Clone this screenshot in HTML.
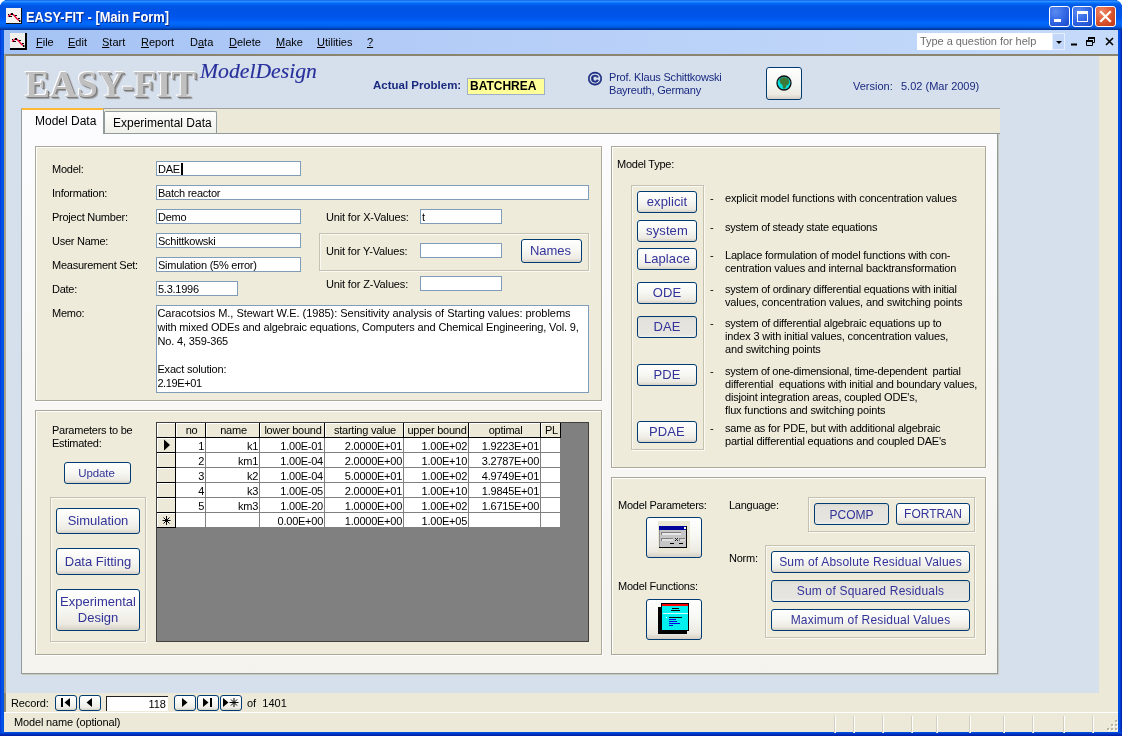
<!DOCTYPE html>
<html>
<head>
<meta charset="utf-8">
<title>EASY-FIT - [Main Form]</title>
<style>
*{box-sizing:border-box;margin:0;padding:0}
html,body{width:1122px;height:736px;overflow:hidden;background:#0054e3}
body{font-family:"Liberation Sans",sans-serif;font-size:11px;color:#000;position:relative}
.abs,.abs *{position:absolute}
#win{position:absolute;left:0;top:0;width:1122px;height:736px;overflow:hidden;will-change:transform}
#win div,#win span,#win svg{position:absolute}
/* title bar */
#title{left:0;top:0;width:1122px;height:30px;background:linear-gradient(to bottom,#0058ee 0%,#3593ff 4%,#288eff 6%,#127dff 8%,#036ffc 10%,#0262ee 14%,#0057e5 20%,#0054e3 24%,#0055eb 56%,#005bf5 66%,#026afe 76%,#0062ef 86%,#0052d6 92%,#0040ab 96%,#003092 100%);border-radius:7px 7px 0 0}
#title .txt{left:26px;top:9px;font-weight:bold;font-size:14px;color:#fff;white-space:nowrap;text-shadow:1px 1px 0 #0a2a8a;transform-origin:0 0;transform:scaleX(0.92)}
.lb{left:0;top:30px;width:4px;height:706px;background:linear-gradient(to right,#0831d9 0,#0046e0 1px,#0058f0 2px,#0054e3 3px,#0048d8 4px)}
.rb{left:1118px;top:30px;width:4px;height:706px;background:linear-gradient(to right,#0048d8 0,#0054e3 1px,#0046e0 2px,#0030c0 3px,#001ea0 4px)}
.bb{left:0;top:732px;width:1122px;height:4px;background:linear-gradient(to bottom,#0054e3 0,#0048d8 1px,#0030c0 2px,#001ea0 4px)}
/* menu bar */
#menu{left:4px;top:30px;width:1114px;height:24px;background:linear-gradient(to right,#a4c2f4 0%,#b4cdf7 40%,#c6dbfa 100%)}
#menu .mi{top:6px;font-size:11px;white-space:nowrap;color:#000}
#menu u{text-decoration:underline;text-underline-offset:1px}

.cb{top:6px;width:21px;height:21px;border:1px solid #fff;border-radius:3px;background:radial-gradient(circle at 30% 25%,#5b8cf0 0%,#3a6ee8 40%,#2458d8 75%,#1c48c0 100%)}
.cb.cx{background:radial-gradient(circle at 30% 25%,#ee8a6a 0%,#e0603a 40%,#cc4420 75%,#b83a18 100%)}
#help{left:913px;top:3px;width:148px;height:17px;background:#fff;border:1px solid #fff}
#help span{left:2px;top:1px;font-size:11px;letter-spacing:-0.05px;color:#6e6e6e;white-space:nowrap}
#help .dd{left:134px;top:-1px;width:13px;height:17px;background:#c2d7f8;border:1px solid #e4eefc}
#help .dd svg{left:0;top:-1px}

#logo{left:25px;top:62px;transform-origin:0 0;transform:scaleX(0.985);font-family:"Liberation Serif",serif;font-weight:bold;font-size:38px;color:#c0c0c0;white-space:nowrap;text-shadow:-1px -1px 0 #fff,1px 1px 0 #7a7a7a,2px 2px 1px #9a9a9a;letter-spacing:0px}
#sub{left:200px;top:59px;font-family:"Liberation Serif",serif;font-style:italic;font-size:21.700px;color:#28309c;white-space:nowrap;-webkit-text-stroke:0.15px #28309c}
.hb{font-weight:bold;font-size:11.5px;color:#1a2a80;white-space:nowrap}
.hn{font-size:11px;color:#1a2a80;white-space:nowrap;letter-spacing:-0.2px}
#prob{left:467px;top:78px;width:78px;height:17px;background:#ffff99;border:1px solid #9fb0c8}
#prob span{left:2px;top:0px;font-weight:bold;font-size:12px;color:#000}
#copy{left:588px;top:67.500px;font-size:19px;color:#1a2a80;font-weight:bold;-webkit-text-stroke:0.6px #1a2a80}
#tabstrip{left:21px;top:108px;width:979px;height:26px;background:#ece9d8;border-top:1px solid #a0a0a0;border-bottom:1px solid #919b9c}
#tabpage{left:21px;top:133px;width:977px;height:541px;background:linear-gradient(to bottom,#fcfcfe 0%,#f4f3ee 100%);border:1px solid #919b9c;box-shadow:1px 1px 0 #c9c7ba}
#tab1{left:21px;top:108px;width:83px;height:26px;background:#fcfcfe;border-left:1px solid #919b9c;border-right:1px solid #919b9c;border-top:2px solid #ffb834;border-radius:2px 2px 0 0}
#tab1 span{left:13px;top:4px;font-size:12px;white-space:nowrap}
#tab2{left:104px;top:111px;width:113px;height:22px;background:linear-gradient(#fefefe,#f0f0ea);border:1px solid #919b9c;border-bottom:none;border-radius:2px 2px 0 0}
#tab2 span{left:8px;top:4px;font-size:12px;white-space:nowrap}
.inp.memo span{white-space:nowrap;line-height:14px;top:0px;left:0.400px}

#grid{left:156px;top:422px;width:433px;height:220px;background:#808080;border:1px solid #404040;overflow:hidden}
#grid .gh{background:#ece9d8;border-right:1px solid #000;border-bottom:1px solid #000;box-shadow:inset 1px 1px 0 #fff;font-size:11px;letter-spacing:-0.25px;overflow:hidden}
#grid .gh span{left:1px;width:100%;text-align:center;top:1px;white-space:nowrap;line-height:12px}
#grid .gs{background:#ece9d8;border-right:1px solid #000;border-bottom:1px solid #000;box-shadow:inset 1px 1px 0 #fff}
#grid .gc{background:#fff;border-right:1px solid #808080;border-bottom:1px solid #808080;font-size:11px;letter-spacing:-0.25px;overflow:hidden}
#grid .gc span{right:1px;top:2px;white-space:nowrap;line-height:13px;text-align:right}
.btn.sm{font-size:11.500px;letter-spacing:-0.1px}

.btn.mt{font-size:13px;letter-spacing:0.1px}
.btn.sm2{font-size:12px;letter-spacing:0.2px}

.tah{font-size:11px;white-space:nowrap;color:#000}
.btn.nb{top:2px;width:22px;height:16px;border-radius:3px}
.btn.nb svg{left:0;top:0}
#recno{left:100px;top:3px;width:62px;height:15px;background:#fff;border-top:1px solid #202020;border-left:1px solid #202020}
#recno span{right:2px;top:1px;font-size:11px}
#status .sep{top:3px;width:2px;height:17px;border-left:1px solid #d2cfc0;border-right:1px solid #fff}
.lbl.ds{letter-spacing:-0.17px}
/* client */
#client{left:4px;top:54px;width:1114px;height:639px;background:#d6dfec;border-top:2px solid #8b8570;border-left:2px solid #a8a28c}
#rstrip{left:1099px;top:56px;width:19px;height:637px;background:#ece9d8}
#nav{left:4px;top:693px;width:1114px;height:19px;background:#ece9d8;border-left:2px solid #8e8872}
#status{left:4px;top:712px;width:1114px;height:20px;background:#ece9d8;border-top:1px solid #fff}
.t11{font-size:11px;white-space:nowrap}
.lbl{font-size:11px;white-space:nowrap;color:#000;letter-spacing:-0.25px}
.inp{background:#fff;border:1px solid #7f9db9;height:15px;font-size:11px;white-space:nowrap;overflow:hidden;letter-spacing:-0.25px}
.inp span{left:1px;top:1px;line-height:13px}
.panel{background:#eeebdb;border:1px solid #aca899;box-shadow:1px 1px 0 #fff, inset 1px 1px 0 #fff}
.grp{border:1px solid #c5c2b2;box-shadow:1px 1px 0 #fbfaf5, inset 1px 1px 0 rgba(255,255,255,0.65)}
.btn{border:1px solid #003c74;border-radius:3px;background:linear-gradient(to bottom,#fff 0%,#f6f6f2 50%,#eceae2 85%,#d6d0c5 100%);color:#333399;font-size:13px;text-align:center;white-space:nowrap}
.btn.on{background:linear-gradient(to bottom,#d9d8d0 0%,#e3e2dc 15%,#e6e5df 85%,#efeee9 100%)}
.btn span{left:0;width:100%;text-align:center}
</style>
</head>
<body>
<div id="win">
  <div style="left:0;top:0;width:5px;height:5px;background:#fff"></div><div style="left:1117px;top:0;width:5px;height:5px;background:#fff"></div>
  <div id="title">
    <svg style="left:6px;top:8px" width="16" height="16" viewBox="0 0 16 16"><rect width="16" height="16" fill="#f4f2f0"/><rect x="0" y="15" width="16" height="1" fill="#111"/><rect x="15" y="0" width="1" height="16" fill="#111"/><path d="M2 8.5 L5.500 5.800 L7.500 6.800 L11 10.800 L13 12.500" stroke="#f0002a" stroke-width="1.3" fill="none"/><rect x="2" y="6" width="1" height="1" fill="#000"/><rect x="5" y="5" width="2" height="2" fill="#000"/><rect x="3" y="8" width="3" height="1" fill="#000"/><rect x="9" y="7" width="2" height="1" fill="#000"/><rect x="12" y="10" width="2" height="1" fill="#000"/><rect x="13" y="12" width="1.500" height="2" fill="#000"/></svg>
    <span class="txt">EASY-FIT - [Main Form]</span>
    <div class="cb" style="left:1049px"><svg width="21" height="21" viewBox="0 0 21 21" style="left:-1px;top:-1px"><rect x="5" y="13" width="7" height="3" fill="#fff"/></svg></div>
    <div class="cb" style="left:1072px"><svg width="21" height="21" viewBox="0 0 21 21" style="left:-1px;top:-1px"><rect x="5.5" y="6.5" width="10" height="9" fill="none" stroke="#fff" stroke-width="1"/><rect x="5" y="5" width="11" height="3" fill="#fff"/></svg></div>
    <div class="cb cx" style="left:1095px"><svg width="21" height="21" viewBox="0 0 21 21" style="left:-1px;top:-1px"><path d="M6 6 L15 15 M15 6 L6 15" stroke="#fff" stroke-width="2.2" stroke-linecap="square"/></svg></div>
  </div>
  <div class="lb"></div><div class="rb"></div><div class="bb"></div>
  <div id="menu">
    <svg style="left:6px;top:3px" width="17" height="17" viewBox="0 0 17 17"><rect width="16" height="16" fill="#f0f0ec"/><rect x="0" y="15" width="17" height="2" fill="#000"/><rect x="15" y="0" width="2" height="17" fill="#000"/><path d="M2 8.5 L5.500 5.800 L7.500 6.800 L11 10.800 L13 12.500" stroke="#f0002a" stroke-width="1.3" fill="none"/><rect x="2" y="6" width="1" height="1" fill="#000"/><rect x="5" y="5" width="2" height="2" fill="#000"/><rect x="3" y="8" width="3" height="1" fill="#000"/><rect x="9" y="7" width="2" height="1" fill="#000"/><rect x="12" y="10" width="2" height="1" fill="#000"/><rect x="13" y="12" width="1.500" height="2" fill="#000"/></svg>
    <span class="mi" style="left:32px"><u>F</u>ile</span>
    <span class="mi" style="left:64px"><u>E</u>dit</span>
    <span class="mi" style="left:98px"><u>S</u>tart</span>
    <span class="mi" style="left:137px"><u>R</u>eport</span>
    <span class="mi" style="left:186px">D<u>a</u>ta</span>
    <span class="mi" style="left:225px"><u>D</u>elete</span>
    <span class="mi" style="left:272px"><u>M</u>ake</span>
    <span class="mi" style="left:313px"><u>U</u>tilities</span>
    <span class="mi" style="left:363px"><u>?</u></span>
    <div id="help"><span>Type a question for help</span><div class="dd"><svg width="12" height="18" viewBox="0 0 12 18"><path d="M3 8 L9 8 L6 11 Z" fill="#000"/></svg></div></div>
    <svg style="left:1065px;top:4px" width="48" height="14" viewBox="0 0 48 14"><rect x="2" y="9.5" width="6" height="2" fill="#000"/><path d="M19.5 3.5 h6 v5 h-6 z M17.500 6.500 h6 v5 h-6 z" fill="none" stroke="#000" stroke-width="1"/><rect x="19" y="3" width="7" height="2" fill="#000"/><rect x="17" y="6" width="7" height="2" fill="#000"/><rect x="18" y="8" width="5" height="3" fill="#c2d7f8"/><path d="M37 4 L44 11 M44 4 L37 11" stroke="#000" stroke-width="1.6"/></svg>
  </div>
  <div id="client"></div>
  <div id="rstrip"></div>
  <!-- header -->
  <span id="logo">EASY-FIT</span>
  <span id="sub">ModelDesign</span>
  <span class="hb" style="left:373px;top:79px">Actual Problem:</span>
  <div id="prob"><span>BATCHREA</span></div>
  <span id="copy">&copy;</span>
  <span class="hn" style="left:609px;top:71px">Prof. Klaus Schittkowski</span>
  <span class="hn" style="left:609px;top:84px">Bayreuth, Germany</span>
  <div class="btn" style="left:766px;top:67px;width:36px;height:33px"><svg style="left:7.500px;top:5.500px" width="18" height="18" viewBox="0 0 18 18"><circle cx="9" cy="9" r="7" fill="#00e0e0" stroke="#101010" stroke-width="1.3"/><path d="M5 4.500 L8.500 3 L12.500 4 L14.500 7.500 L13.500 10.500 L11.500 11.500 L10.500 14.500 L8 14.500 L7.500 11 L5.500 9.500 L4.500 7 Z" fill="#3d7a3a"/></svg></div>
  <span class="hn" style="left:853px;top:80px;letter-spacing:0">Version:</span>
  <span class="hn" style="left:901px;top:80px;letter-spacing:0">5.02 (Mar 2009)</span>
  <!-- tabs -->
  <div id="tabstrip"></div>
  <div id="tabpage"></div>
  <div id="tab2"><span>Experimental Data</span></div>
  <div id="tab1"><span>Model Data</span></div>
  <!-- panel 1 -->
  <div class="panel" style="left:35px;top:146px;width:567px;height:255px"></div>
  <span class="lbl" style="left:52px;top:163px">Model:</span>
  <span class="lbl" style="left:52px;top:187px">Information:</span>
  <span class="lbl" style="left:52px;top:211px">Project Number:</span>
  <span class="lbl" style="left:52px;top:235px">User Name:</span>
  <span class="lbl" style="left:52px;top:259px">Measurement Set:</span>
  <span class="lbl" style="left:52px;top:283px">Date:</span>
  <span class="lbl" style="left:52px;top:307px">Memo:</span>
  <div class="inp" style="left:156px;top:161px;width:145px"><span>DAE</span><div style="left:24px;top:1px;width:1.500px;height:12px;background:#000"></div></div>
  <div class="inp" style="left:156px;top:185px;width:433px"><span>Batch reactor</span></div>
  <div class="inp" style="left:156px;top:209px;width:145px"><span>Demo</span></div>
  <div class="inp" style="left:156px;top:233px;width:145px"><span>Schittkowski</span></div>
  <div class="inp" style="left:156px;top:257px;width:145px"><span>Simulation (5% error)</span></div>
  <div class="inp" style="left:156px;top:281px;width:82px"><span>5.3.1996</span></div>
  <span class="lbl" style="left:326px;top:211px;letter-spacing:-0.15px">Unit for X-Values:</span>
  <span class="lbl" style="left:326px;top:245px;letter-spacing:-0.15px">Unit for Y-Values:</span>
  <span class="lbl" style="left:326px;top:278px;letter-spacing:-0.15px">Unit for Z-Values:</span>
  <div class="inp" style="left:420px;top:209px;width:82px"><span>t</span></div>
  <div class="grp" style="left:319px;top:233px;width:270px;height:38px"></div>
  <div class="inp" style="left:420px;top:243px;width:82px"></div>
  <div class="inp" style="left:420px;top:276px;width:82px"></div>
  <div class="btn" style="left:521px;top:239px;width:61px;height:24px"><span style="top:3px;left:-1px">Names</span></div>
  <div class="inp memo" style="left:156px;top:305px;width:433px;height:88px"><span style="letter-spacing:-0.03px">Caracotsios M., Stewart W.E. (1985): Sensitivity analysis of Starting values: problems</span><span style="top:14px;letter-spacing:-0.138px">with mixed ODEs and algebraic equations, Computers and Chemical Engineering, Vol. 9,</span><span style="top:28px;letter-spacing:-0.15px">No. 4, 359-365</span><span style="top:56px;letter-spacing:-0.17px">Exact solution:</span><span style="top:70px;letter-spacing:-0.4px">2.19E+01</span></div>
  <!-- panel 2 -->
  <div class="panel" style="left:35px;top:410px;width:567px;height:245px"></div>
  <span class="lbl" style="left:52px;top:424px">Parameters to be</span>
  <span class="lbl" style="left:52px;top:437px">Estimated:</span>
  <div class="btn sm" style="left:64px;top:462px;width:67px;height:22px"><span style="top:3.500px;left:-1px">Update</span></div>
  <div class="grp" style="left:50px;top:497px;width:96px;height:145px"></div>
  <div class="btn" style="left:56px;top:508px;width:84px;height:26px"><span style="top:4px">Simulation</span></div>
  <div class="btn" style="left:56px;top:548px;width:84px;height:27px"><span style="top:5px">Data Fitting</span></div>
  <div class="btn" style="left:56px;top:589px;width:84px;height:42px"><span style="top:4px;line-height:16px">Experimental<br>Design</span></div>
  <div id="grid">
  <div class="gh" style="left:0px;top:0;width:19px;height:15px"><span></span></div>
  <div class="gh" style="left:19px;top:0;width:30px;height:15px"><span>no</span></div>
  <div class="gh" style="left:49px;top:0;width:54px;height:15px"><span>name</span></div>
  <div class="gh" style="left:103px;top:0;width:65px;height:15px"><span>lower bound</span></div>
  <div class="gh" style="left:168px;top:0;width:79px;height:15px"><span>starting value</span></div>
  <div class="gh" style="left:247px;top:0;width:65px;height:15px"><span>upper bound</span></div>
  <div class="gh" style="left:312px;top:0;width:72px;height:15px"><span>optimal</span></div>
  <div class="gh" style="left:384px;top:0;width:20px;height:15px"><span>PL</span></div>
  <div class="gs" style="left:0;top:15px;width:19px;height:15px"><svg width="19" height="15" viewBox="0 0 19 15" style="left:0;top:0"><path d="M7 1.500 L13 7 L7 12.500 Z" fill="#000"/></svg></div>
  <div class="gc" style="left:19px;top:15px;width:30px;height:15px"><span>1</span></div>
  <div class="gc" style="left:49px;top:15px;width:54px;height:15px"><span>k1</span></div>
  <div class="gc" style="left:103px;top:15px;width:65px;height:15px"><span>1.00E-01</span></div>
  <div class="gc" style="left:168px;top:15px;width:79px;height:15px"><span>2.0000E+01</span></div>
  <div class="gc" style="left:247px;top:15px;width:65px;height:15px"><span>1.00E+02</span></div>
  <div class="gc" style="left:312px;top:15px;width:72px;height:15px"><span>1.9223E+01</span></div>
  <div class="gc" style="left:384px;top:15px;width:20px;height:15px"><span></span></div>
  <div class="gs" style="left:0;top:30px;width:19px;height:15px"></div>
  <div class="gc" style="left:19px;top:30px;width:30px;height:15px"><span>2</span></div>
  <div class="gc" style="left:49px;top:30px;width:54px;height:15px"><span>km1</span></div>
  <div class="gc" style="left:103px;top:30px;width:65px;height:15px"><span>1.00E-04</span></div>
  <div class="gc" style="left:168px;top:30px;width:79px;height:15px"><span>2.0000E+00</span></div>
  <div class="gc" style="left:247px;top:30px;width:65px;height:15px"><span>1.00E+10</span></div>
  <div class="gc" style="left:312px;top:30px;width:72px;height:15px"><span>3.2787E+00</span></div>
  <div class="gc" style="left:384px;top:30px;width:20px;height:15px"><span></span></div>
  <div class="gs" style="left:0;top:45px;width:19px;height:15px"></div>
  <div class="gc" style="left:19px;top:45px;width:30px;height:15px"><span>3</span></div>
  <div class="gc" style="left:49px;top:45px;width:54px;height:15px"><span>k2</span></div>
  <div class="gc" style="left:103px;top:45px;width:65px;height:15px"><span>1.00E-04</span></div>
  <div class="gc" style="left:168px;top:45px;width:79px;height:15px"><span>5.0000E+01</span></div>
  <div class="gc" style="left:247px;top:45px;width:65px;height:15px"><span>1.00E+02</span></div>
  <div class="gc" style="left:312px;top:45px;width:72px;height:15px"><span>4.9749E+01</span></div>
  <div class="gc" style="left:384px;top:45px;width:20px;height:15px"><span></span></div>
  <div class="gs" style="left:0;top:60px;width:19px;height:15px"></div>
  <div class="gc" style="left:19px;top:60px;width:30px;height:15px"><span>4</span></div>
  <div class="gc" style="left:49px;top:60px;width:54px;height:15px"><span>k3</span></div>
  <div class="gc" style="left:103px;top:60px;width:65px;height:15px"><span>1.00E-05</span></div>
  <div class="gc" style="left:168px;top:60px;width:79px;height:15px"><span>2.0000E+01</span></div>
  <div class="gc" style="left:247px;top:60px;width:65px;height:15px"><span>1.00E+10</span></div>
  <div class="gc" style="left:312px;top:60px;width:72px;height:15px"><span>1.9845E+01</span></div>
  <div class="gc" style="left:384px;top:60px;width:20px;height:15px"><span></span></div>
  <div class="gs" style="left:0;top:75px;width:19px;height:15px"></div>
  <div class="gc" style="left:19px;top:75px;width:30px;height:15px"><span>5</span></div>
  <div class="gc" style="left:49px;top:75px;width:54px;height:15px"><span>km3</span></div>
  <div class="gc" style="left:103px;top:75px;width:65px;height:15px"><span>1.00E-20</span></div>
  <div class="gc" style="left:168px;top:75px;width:79px;height:15px"><span>1.0000E+00</span></div>
  <div class="gc" style="left:247px;top:75px;width:65px;height:15px"><span>1.00E+02</span></div>
  <div class="gc" style="left:312px;top:75px;width:72px;height:15px"><span>1.6715E+00</span></div>
  <div class="gc" style="left:384px;top:75px;width:20px;height:15px"><span></span></div>
  <div class="gs" style="left:0;top:90px;width:19px;height:15px"><svg width="19" height="15" viewBox="0 0 19 15" style="left:0;top:0"><path d="M9.5 3 V12 M5.500 7.500 H13.500 M6.500 4.500 L12.500 10.500 M12.500 4.500 L6.500 10.500" stroke="#000" stroke-width="1" fill="none"/></svg></div>
  <div class="gc" style="left:19px;top:90px;width:30px;height:15px"><span></span></div>
  <div class="gc" style="left:49px;top:90px;width:54px;height:15px"><span></span></div>
  <div class="gc" style="left:103px;top:90px;width:65px;height:15px"><span>0.00E+00</span></div>
  <div class="gc" style="left:168px;top:90px;width:79px;height:15px"><span>1.0000E+00</span></div>
  <div class="gc" style="left:247px;top:90px;width:65px;height:15px"><span>1.00E+05</span></div>
  <div class="gc" style="left:312px;top:90px;width:72px;height:15px"><span></span></div>
  <div class="gc" style="left:384px;top:90px;width:20px;height:15px"><span></span></div>
  </div>
  <!-- panel 3 -->
  <div class="panel" style="left:611px;top:146px;width:375px;height:322px"></div>
  <span class="lbl" style="left:617px;top:158px">Model Type:</span>
  <div class="grp" style="left:631px;top:185px;width:73px;height:265px"></div>
  <div class="btn mt" style="left:637px;top:191px;width:60px;height:22px"><span style="top:2px">explicit</span></div>
  <div class="btn mt" style="left:637px;top:220px;width:60px;height:22px"><span style="top:2px">system</span></div>
  <div class="btn mt" style="left:637px;top:248px;width:60px;height:22px"><span style="top:2px">Laplace</span></div>
  <div class="btn mt" style="left:637px;top:282px;width:60px;height:22px"><span style="top:2px">ODE</span></div>
  <div class="btn mt on" style="left:637px;top:316px;width:60px;height:22px"><span style="top:2px">DAE</span></div>
  <div class="btn mt" style="left:637px;top:364px;width:60px;height:22px"><span style="top:2px">PDE</span></div>
  <div class="btn mt" style="left:637px;top:421px;width:60px;height:22px"><span style="top:2px">PDAE</span></div>
  <span class="lbl ds" style="left:710px;top:192px">-</span>
  <span class="lbl ds" style="left:725px;top:192px">explicit model functions with concentration values</span>
  <span class="lbl ds" style="left:710px;top:221px">-</span>
  <span class="lbl ds" style="left:725px;top:221px;letter-spacing:-0.250px">system of steady state equations</span>
  <span class="lbl ds" style="left:710px;top:249px">-</span>
  <span class="lbl ds" style="left:725px;top:249px;letter-spacing:-0.210px">Laplace formulation of model functions with con-</span>
  <span class="lbl ds" style="left:725px;top:262px;letter-spacing:-0.186px">centration values and internal backtransformation</span>
  <span class="lbl ds" style="left:710px;top:283px">-</span>
  <span class="lbl ds" style="left:725px;top:283px;letter-spacing:-0.246px">system of ordinary differential equations with initial</span>
  <span class="lbl ds" style="left:725px;top:296px;letter-spacing:-0.134px">values, concentration values, and switching points</span>
  <span class="lbl ds" style="left:710px;top:317px">-</span>
  <span class="lbl ds" style="left:725px;top:317px;letter-spacing:-0.214px">system of differential algebraic equations up to</span>
  <span class="lbl ds" style="left:725px;top:330px;letter-spacing:-0.160px">index 3 with initial values, concentration values,</span>
  <span class="lbl ds" style="left:725px;top:343px">and switching points</span>
  <span class="lbl ds" style="left:710px;top:365px">-</span>
  <span class="lbl ds" style="left:725px;top:365px;letter-spacing:-0.278px">system of one-dimensional, time-dependent&nbsp; partial</span>
  <span class="lbl ds" style="left:725px;top:378px;letter-spacing:-0.196px">differential&nbsp; equations with initial and boundary values,</span>
  <span class="lbl ds" style="left:725px;top:391px;letter-spacing:-0.218px">disjoint integration areas, coupled ODE's,</span>
  <span class="lbl ds" style="left:725px;top:404px">flux functions and switching points</span>
  <span class="lbl ds" style="left:710px;top:422px">-</span>
  <span class="lbl ds" style="left:725px;top:422px;letter-spacing:-0.209px">same as for PDE, but with additional algebraic</span>
  <span class="lbl ds" style="left:725px;top:435px;letter-spacing:-0.197px">partial differential equations and coupled DAE's</span>
  <!-- panel 4 -->
  <div class="panel" style="left:611px;top:477px;width:375px;height:178px"></div>
  <span class="lbl" style="left:618px;top:499px">Model Parameters:</span>
  <span class="lbl" style="left:618px;top:580px">Model Functions:</span>
  <span class="lbl" style="left:729px;top:499px">Language:</span>
  <span class="lbl" style="left:729px;top:552px">Norm:</span>
  <div class="btn" style="left:646px;top:517px;width:56px;height:41px"><svg style="left:11px;top:3px" width="32" height="32" viewBox="0 0 32 32" shape-rendering="crispEdges"><rect width="32" height="32" fill="#ebe7d6"/><rect x="1" y="5" width="28" height="22" fill="#c6c6c6"/><rect x="1" y="5" width="27" height="4" fill="#00009c"/><rect x="26" y="6" width="2" height="2" fill="#fff"/><rect x="28" y="5" width="1" height="22" fill="#000"/><rect x="1" y="26" width="28" height="1" fill="#000"/><rect x="1" y="9" width="1" height="17" fill="#909090"/><rect x="3" y="11" width="20" height="1" fill="#808080"/><rect x="3" y="12" width="1" height="2" fill="#808080"/><rect x="4" y="12" width="19" height="2" fill="#e8e8e8"/><rect x="3" y="17" width="12" height="1" fill="#808080"/><rect x="3" y="18" width="1" height="2" fill="#808080"/><rect x="4" y="18" width="11" height="2" fill="#e0e0e0"/><rect x="21" y="17" width="6" height="1" fill="#808080"/><rect x="21" y="18" width="1" height="2" fill="#808080"/><rect x="22" y="18" width="5" height="2" fill="#d8d8d8"/><path d="M17 17 l3 3 m0 -3 l-3 3" stroke="#202020" stroke-width="1" shape-rendering="auto"/><rect x="12" y="22" width="4" height="1" fill="#000"/><rect x="21" y="22" width="4" height="1" fill="#000"/></svg></div>
  <div class="btn" style="left:646px;top:599px;width:56px;height:41px"><svg style="left:11px;top:3px" width="32" height="32" viewBox="0 0 32 32" shape-rendering="crispEdges"><rect x="0" y="4" width="29" height="27" fill="#000"/><rect x="3" y="0" width="28" height="28" fill="#000"/><rect x="4" y="1" width="26" height="2" fill="#ff0000"/><rect x="4" y="3" width="26" height="24" fill="#00f0f0"/><rect x="14" y="5" width="7" height="1" fill="#000"/><rect x="13" y="7" width="9" height="1" fill="#000"/><rect x="5" y="10" width="25" height="1" fill="#d0ffff"/><rect x="8" y="14" width="1" height="1" fill="#fff"/><rect x="11" y="14" width="13" height="1" fill="#000"/><rect x="11" y="16" width="7" height="1" fill="#0000e0"/><rect x="11" y="18" width="8" height="1" fill="#0000e0"/><rect x="11" y="20" width="11" height="1" fill="#0000e0"/><rect x="11" y="22" width="4" height="1" fill="#0000e0"/></svg></div>
  <div class="grp" style="left:808px;top:497px;width:167px;height:35px"></div>
  <div class="btn sm2 on" style="left:814px;top:503px;width:75px;height:22px;letter-spacing:0"><span style="top:3.500px">PCOMP</span></div>
  <div class="btn sm2" style="left:896px;top:503px;width:74px;height:22px;letter-spacing:0"><span style="top:3px">FORTRAN</span></div>
  <div class="grp" style="left:765px;top:545px;width:210px;height:93px"></div>
  <div class="btn sm2" style="left:771px;top:551px;width:199px;height:22px"><span style="top:3px">Sum of Absolute Residual Values</span></div>
  <div class="btn sm2 on" style="left:771px;top:580px;width:199px;height:22px"><span style="top:3px">Sum of Squared Residuals</span></div>
  <div class="btn sm2" style="left:771px;top:609px;width:199px;height:22px"><span style="top:3px">Maximum of Residual Values</span></div>
  <div id="nav">
    <span class="tah" style="left:5px;top:4px;letter-spacing:-0.1px">Record:</span>
    <div class="btn nb" style="left:49px"><svg width="20" height="14" viewBox="0 0 20 14"><rect x="5" y="2" width="2" height="9" fill="#000"/><path d="M14 2 L8.500 6.500 L14 11 Z" fill="#000"/></svg></div>
    <div class="btn nb" style="left:73px"><svg width="20" height="14" viewBox="0 0 20 14"><path d="M12 2 L6.500 6.500 L12 11 Z" fill="#000"/></svg></div>
    <div id="recno"><span>118</span></div>
    <div class="btn nb" style="left:168px"><svg width="20" height="14" viewBox="0 0 20 14" style="left:-1.500px"><path d="M8 2 L13.500 6.500 L8 11 Z" fill="#000"/></svg></div>
    <div class="btn nb" style="left:191px"><svg width="20" height="14" viewBox="0 0 20 14" style="left:-1.500px"><path d="M6 2 L11.500 6.500 L6 11 Z" fill="#000"/><rect x="13" y="2" width="2" height="9" fill="#000"/></svg></div>
    <div class="btn nb" style="left:214px"><svg width="20" height="14" viewBox="0 0 20 14" style="left:-1.500px"><path d="M3 2 L8.500 6.500 L3 11 Z" fill="#000"/><path d="M14 2 V11 M9.500 6.500 H18.500 M11 3.500 L17 9.500 M17 3.500 L11 9.500" stroke="#000" stroke-width="1" fill="none"/></svg></div>
    <span class="tah" style="left:241px;top:4px">of&nbsp; 1401</span>
  </div>
  <div id="status">
    <span class="tah" style="left:10px;top:3px;letter-spacing:-0.15px">Model name (optional)</span>
    <div class="sep" style="left:830px"></div>
    <div class="sep" style="left:849px"></div>
    <div class="sep" style="left:878px"></div>
    <div class="sep" style="left:907px"></div>
    <div class="sep" style="left:932px"></div>
    <div class="sep" style="left:965px"></div>
    <div class="sep" style="left:999px"></div>
    <div class="sep" style="left:1028px"></div>
    <div class="sep" style="left:1059px"></div>
    <div class="sep" style="left:1088px"></div>
    <svg style="left:1102px;top:6px" width="13" height="13" viewBox="0 0 13 13"><g fill="#b8b4a2"><rect x="9" y="1" width="2" height="2"/><rect x="5" y="5" width="2" height="2"/><rect x="9" y="5" width="2" height="2"/><rect x="1" y="9" width="2" height="2"/><rect x="5" y="9" width="2" height="2"/><rect x="9" y="9" width="2" height="2"/></g><g fill="#fff"><rect x="10" y="2" width="2" height="2"/><rect x="6" y="6" width="2" height="2"/><rect x="10" y="6" width="2" height="2"/><rect x="2" y="10" width="2" height="2"/><rect x="6" y="10" width="2" height="2"/><rect x="10" y="10" width="2" height="2"/></g><g fill="#b8b4a2"><rect x="9" y="1" width="2" height="2"/><rect x="5" y="5" width="2" height="2"/><rect x="9" y="5" width="2" height="2"/><rect x="1" y="9" width="2" height="2"/><rect x="5" y="9" width="2" height="2"/><rect x="9" y="9" width="2" height="2"/></g></svg>
  </div>
</div>
</body>
</html>
